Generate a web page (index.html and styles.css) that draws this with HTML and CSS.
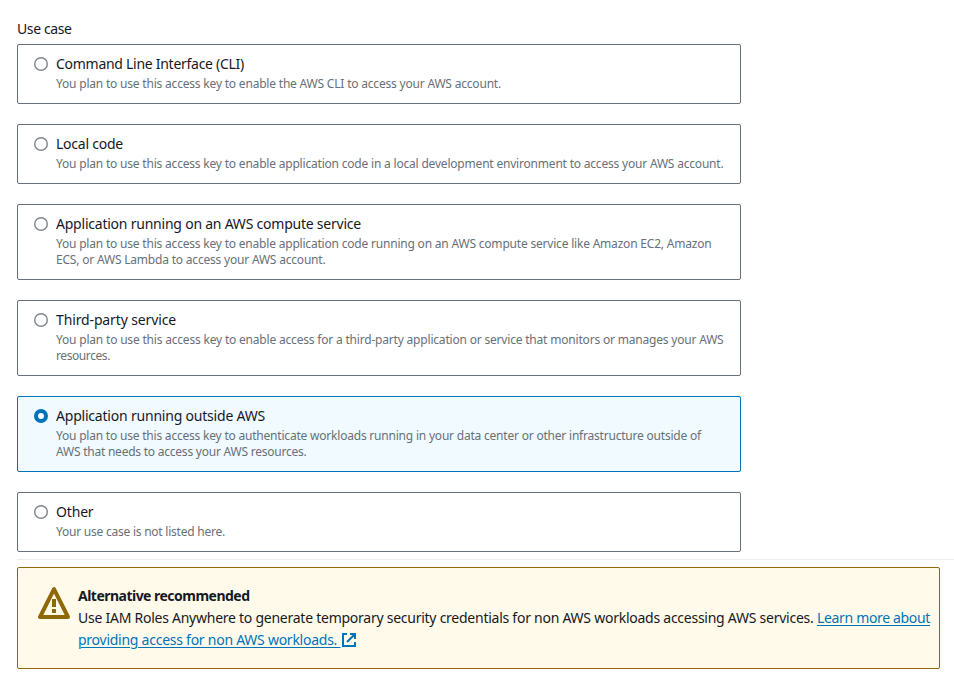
FILE: index.html
```html
<!DOCTYPE html>
<html lang="en">
<head>
<meta charset="utf-8">
<title>Use case</title>
<link rel="stylesheet" href="styles.css">
</head>
<body>
<main>
<h1><span class="fit" data-w="54.5">Use case</span></h1>
<div class="tiles">
<label class="tile"><span class="radio"></span><span class="copy"><span class="title"><span class="fit" data-w="188">Command Line Interface (CLI)</span></span><span class="desc"><span class="fit" data-w="445">You plan to use this access key to enable the AWS CLI to access your AWS account.</span></span></span></label>
<label class="tile"><span class="radio"></span><span class="copy"><span class="title"><span class="fit" data-w="67">Local code</span></span><span class="desc"><span class="fit" data-w="667.5">You plan to use this access key to enable application code in a local development environment to access your AWS account.</span></span></span></label>
<label class="tile"><span class="radio"></span><span class="copy"><span class="title"><span class="fit" data-w="305">Application running on an AWS compute service</span></span><span class="desc"><span class="fit" data-w="655.5">You plan to use this access key to enable application code running on an AWS compute service like Amazon EC2, Amazon</span><br><span class="fit" data-w="269.5">ECS, or AWS Lambda to access your AWS account.</span></span></span></label>
<label class="tile"><span class="radio"></span><span class="copy"><span class="title"><span class="fit" data-w="120">Third-party service</span></span><span class="desc"><span class="fit" data-w="667.5">You plan to use this access key to enable access for a third-party application or service that monitors or manages your AWS</span><br><span class="fit" data-w="54">resources.</span></span></span></label>
<label class="tile selected"><span class="radio"></span><span class="copy"><span class="title"><span class="fit" data-w="209">Application running outside AWS</span></span><span class="desc"><span class="fit" data-w="645">You plan to use this access key to authenticate workloads running in your data center or other infrastructure outside of</span><br><span class="fit" data-w="250.5">AWS that needs to access your AWS resources.</span></span></span></label>
<label class="tile"><span class="radio"></span><span class="copy"><span class="title"><span class="fit" data-w="37.5">Other</span></span><span class="desc"><span class="fit" data-w="169">Your use case is not listed here.</span></span></span></label>
</div>
<hr>
<section class="alert">
<svg class="warn" viewBox="0 0 32 32"><path d="M16 2.2 2 30H30Z" fill="none" stroke="#906806" stroke-width="4" stroke-linejoin="round"/><path d="M16 12v8M16 22v4" stroke="#906806" stroke-width="4"/></svg>
<div class="message"><h2><span class="fit" data-w="171.5">Alternative recommended</span></h2>
<p><span class="fit" data-w="735.5">Use IAM Roles Anywhere to generate temporary security credentials for non AWS workloads accessing AWS services.</span><a href="#" class="fit gap" data-w="113">Learn more about</a><br><a href="#" class="fit" data-w="262.5">providing access for non AWS workloads.&nbsp;</a><svg class="ext" viewBox="0 0 16 16"><path d="M6 2H2v12h12v-4M9 2h5v5M6 10 14 2" fill="none" stroke="#0073bb" stroke-width="2"/></svg></p></div>
</section>
</main>
<script src="script.js"></script>
</body>
</html>
```
FILE: styles.css
```css
* { box-sizing: border-box; }
body { margin: 0; background: #fff; color: #16191f; font: 14px/22px "Noto Sans", sans-serif; overflow: hidden; }
main { padding: 18px 0 0 17px; }
h1, h2, p { margin: 0; font-size: 14px; line-height: 22px; }
h1 { font-weight: 400; margin-bottom: 4px; }
.tiles { display: flex; flex-direction: column; gap: 20px; width: 724px; }
.tile { display: flex; gap: 8px; border: 1px solid #687078; border-radius: 2px; padding: 8px 0 11px 16px; }
.radio { flex: none; width: 14px; height: 14px; margin-top: 4px; border-radius: 50%; background: #fff; box-shadow: inset 0 0 0 1.4px #7d878c; }
.selected { background: #f1faff; border-color: #0073bb; }
.selected .radio { border: 4px solid #0073bb; box-shadow: none; }
.copy, .title, .desc { display: block; }
.title { height: 23px; }
.desc { color: #687078; font-size: 12px; line-height: 16px; }
.fit { white-space: nowrap; }
hr { border: 0; height: 1px; margin: 7px 0; background: #eaeded; }
.alert { display: flex; width: 923px; height: 102px; padding: 17px 0 0 20px; border: 1px solid #906806; border-radius: 2px; background: #fffaea; }
.warn { width: 32px; height: 32px; margin: 2px 8px 0 0; flex: none; }
.message { white-space: nowrap; }
a { color: #0073bb; text-decoration: underline; text-decoration-thickness: 1px; text-underline-offset: 2px; }
.gap { margin-left: 3.5px; }
.ext { width: 16px; height: 16px; vertical-align: -3px; margin-left: .5px; }
```
FILE: script.js
```js
document.querySelectorAll('.fit').forEach(el => {
  const width = el.getBoundingClientRect().width;
  el.style.letterSpacing = (Number(el.dataset.w) - width) / el.textContent.length + 'px';
});
```
